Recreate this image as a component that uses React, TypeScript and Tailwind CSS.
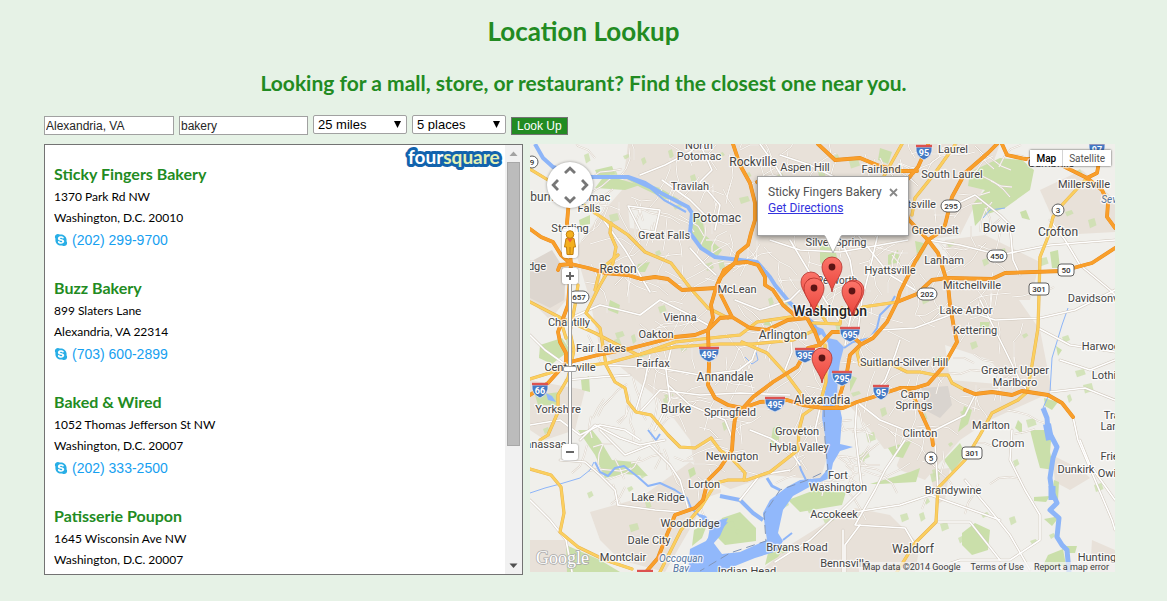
import React from "react";
import { FaSkype } from "react-icons/fa";

const places = [
  { name: "Sticky Fingers Bakery", street: "1370 Park Rd NW", city: "Washington, D.C. 20010", phone: "(202) 299-9700" },
  { name: "Buzz Bakery", street: "899 Slaters Lane", city: "Alexandria, VA 22314", phone: "(703) 600-2899" },
  { name: "Baked & Wired", street: "1052 Thomas Jefferson St NW", city: "Washington, D.C. 20007", phone: "(202) 333-2500" },
  { name: "Patisserie Poupon", street: "1645 Wisconsin Ave NW", city: "Washington, D.C. 20007", phone: "" },
];

const urban = [
  "M628 144L745 144L1000 144L985 185L960 235L925 240L950 262L1005 280L1040 330L1052 392L990 420L960 440L925 480L900 470L870 430L845 400L820 480L770 475L700 500L690 440L660 400L600 350L590 300L575 250L600 215L622 190Z",
  "M530 260L560 262L566 300L550 320L530 300Z",
  "M530 540L566 540L568 572L530 572Z",
  "M590 512L640 498L690 462L712 478L695 520L665 572L620 560L600 540Z",
  "M945 240L985 235L1040 262L1030 300L980 300L950 270Z",
  "M1052 455L1082 470L1090 478L1070 490L1055 482Z",
  "M855 508L890 515L920 545L915 572L760 572L790 545L830 520Z",
  "M530 380L585 390L575 430L545 440L530 430Z",
  "M1040 190L1082 170L1115 200L1115 232L1060 235Z",
  "M930 470L950 468L945 500L936 505Z",
  "M1092 540L1115 550L1115 572L1090 572Z",
];

const bare = [
  "M628 206L660 210L655 232L630 228Z", "M540 146L626 144L624 172L590 174L556 165Z",
  "M590 385L625 392L635 418L605 434L580 425Z", "M945 345L990 360L1010 385L950 380Z",
  "M720 500L760 512L762 535L735 528Z", "M880 450L905 445L890 482L872 478Z",
  "M720 484L752 500L745 505L722 498Z",
];

const parks = [
  "M970 172L1000 158L1022 160L1034 170L1030 190L1005 208L985 215L975 226L972 205L985 190L968 186Z",
  "M788 500L815 490L846 492L842 505L800 512Z",
  "M722 518L740 512L756 528L756 541L725 545L715 535Z",
  "M694 530L708 522L702 538L692 546Z",
  "M1030 430L1052 430L1050 452L1054 470L1040 468L1035 450Z",
  "M962 533L975 523L990 530L988 550L972 555L962 545Z",
  "M1044 519L1060 516L1052 526Z", "M1034 497L1050 496L1046 502L1034 501Z",
  "M1054 480L1059 482L1058 500L1052 494Z",
  "M692 214L702 216L705 235L722 250L716 258L702 248L692 234Z",
  "M625 178L660 188L680 200L665 199L640 187Z", "M595 170L612 166L615 174L598 177Z",
  "M579 220L590 215L590 224L580 226Z", "M605 175L595 188L625 190L640 185Z",
  "M578 430L592 430L600 440L612 460L635 462L648 476L625 474L605 478L595 455Z",
  "M566 545L600 560L620 572L567 572Z", "M540 345L562 338L570 350L552 364L539 358Z",
  "M581 380L589 376L590 392L582 390Z", "M535 395L560 392L556 405L538 405Z",
  "M820 246L834 244L838 262L828 272L820 262Z", "M915 241L928 244L918 262Z",
  "M688 470L694 467L696 474L690 478Z", "M1044 398L1058 402L1052 410L1045 406Z",
  "M768 553L786 546L778 557L765 565Z", "M1048 555L1063 549L1066 565L1040 572Z",
  "M944 460L960 443L966 455L952 472Z", "M888 448L912 440L903 458L893 456Z",
  "M870 484L910 472L920 468L916 482L880 484Z", "M964 406L972 410L968 424L958 432Z",
  "M1020 212L1026 210L1030 220L1022 218Z", "M1050 252L1058 250L1060 268L1052 268Z",
  "M773 428L780 425L778 450L770 446Z", "M1015 428L1018 420L1022 424L1022 434Z",
  "M638 264L650 262L645 272L635 272Z", "M610 300L620 305L618 314L608 310Z",
  "M880 148L892 152L888 164L878 160Z", "M772 215L790 210L800 225L784 228Z",
  "M765 320L772 318L772 326L764 325Z", "M850 375L857 378L850 392Z",
  "M980 322L990 322L988 330L980 328Z", "M1056 346L1062 350L1058 356Z",
  "M888 255L898 250L900 262L888 265Z", "M1063 546L1077 546L1075 553L1066 553Z",
];

const water = [
  "M815 326L823 329L828 338L837 340L844 347L840 362L838 376L837 395L842 418L840 444L853 447L840 451L833 463L830 478L813 485L793 496L783 510L778 533L783 541L777 551L755 558L735 566L718 572L688 572L690 549L706 541L712 532L709 522L718 524L728 522L718 534L713 542L722 554L740 552L767 540L763 513L770 500L787 487L800 480L820 478L827 470L825 435L822 418L823 402L827 382L830 362L828 343Z",
  "M700 514L706 516L710 522L704 526Z",
  "M728 518L720 536L713 544L722 556L700 556L708 538L711 522Z",
  "M546 393L552 396L556 402L548 400Z",
];

const rivers: [string, number][] = [
  ["M535 144L543 158L553 167L568 172L591 177L628 177L645 183L661 193L688 207L692 213L690 233L701 248L715 257L740 260L757 262L770 277L775 285L790 303L803 315L812 322L820 335", 4],
  ["M628 178L650 188L664 200L686 212", 2],
  ["M844 348L853 342L870 338L877 328L880 315L890 305L895 296", 2],
  ["M1043 408L1047 418L1048 430L1057 447L1053 458L1050 478L1052 492L1057 503L1050 510L1059 518L1057 537L1062 545L1067 550L1069 572", 5],
  ["M1047 424L1050 440", 8], ["M1052 486L1052 500", 7],
  ["M595 462L600 472L608 476L615 468L624 466L638 477L648 486L660 483L675 490L687 498L691 508L701 517", 2],
  ["M530 493L545 488L560 484L580 478L590 470L594 462", 1],
  ["M1068 308L1062 325L1052 358L1050 392L1043 408", 1],
  ["M720 496L740 500L753 513L763 520", 4],
  ["M798 460L801 470L806 480", 2],
  ["M648 430L656 440L660 434", 2],
  ["M767 478L772 486L780 490", 3],
  ["M1005 208L990 210L983 218", 1],
  ["M745 357L752 364L758 360L756 352", 1],
  ["M783 540L792 533", 2],
];

const freeways = [
  "M530 229L541 237L553 242L561 255L571 264L588 268L605 273L628 275L641 279L655 277L668 279L678 287L682 290L716 288",
  "M733 144L740 165L750 183L755 203L755 220L751 233L748 245L738 253L735 263L720 278L716 288L711 305L713 318L708 330L709 365L708 385L715 398L728 405L743 408L760 402L787 400L803 405L823 408L843 408L857 402L870 398L900 388L915 388L928 384L942 368L948 358L957 342L954 328L950 305L948 285L938 253L928 240L908 219",
  "M735 263L747 262L758 265L765 277L765 285L773 290L783 305L798 318L807 318L815 332L820 345",
  "M716 288L724 270L735 263",
  "M757 182L775 195L800 210L830 214L870 206L908 219",
  "M902 388L912 393L922 415L928 428L932 437L933 445",
  "M928 240L915 262L900 292L897 302L887 322L873 338L860 345L850 355L847 372L840 395L836 408",
  "M897 302L917 294L932 280L948 278L992 279L1005 273L1062 271L1092 263L1115 248",
  "M928 240L940 232L945 225L952 197L965 173L988 153L997 144",
  "M1002 144L1007 155L1025 159L1050 159L1067 168L1087 178L1097 173L1100 157L1098 148",
  "M1087 178L1102 190L1108 203L1107 217L1115 228",
  "M818 144L835 160L860 158L877 165L900 171L917 171",
  "M928 145L918 167L907 180L903 192L908 219",
  "M530 395L548 383L566 363L598 355L628 349L675 337L695 335L708 330L720 318L732 317L750 328L767 330L788 320L807 318",
  "M720 293L732 317", "M571 264L560 265L558 270",
  "M569 200L567 223L571 264L568 305L558 332L560 342L566 353L566 363",
  "M743 408L753 397L773 382L797 367L808 348L820 345L832 332L847 332L860 343",
  "M743 408L735 418L733 435L732 450L720 468L708 480L703 500L695 508L675 515L666 537L658 558L646 572",
  "M965 390L975 394L992 392L1012 395L1022 391L1048 395L1062 403L1073 417",
];

const highways = [
  "M530 169L548 180L595 213L628 235L645 252L671 263L691 289L708 308L728 318",
  "M611 223L610 233L616 247L613 263L600 285L586 313L600 328L606 365L615 382L625 388L628 402L636 412L651 415L668 435L680 447L695 448L711 438L720 450L733 460L745 473L744 480",
  "M530 302L561 318L595 333L618 345L638 355", "M530 379L566 368L608 363L641 354L675 342L720 337L740 335L757 322L790 317L807 318",
  "M641 354L675 347L720 344L753 344L793 340L815 330", "M742 342L767 353L787 375L807 402",
  "M578 285L575 305L570 332L574 350L568 378L558 395L558 412L548 435L540 440",
  "M825 345L826 382L820 403L803 415L799 430L798 450L770 472L747 480L728 480L716 483L701 507L681 530L660 572",
  "M530 469L551 475L561 487L564 513L560 532L578 547L605 560L632 569",
  "M853 315L863 307L897 302", "M860 345L857 352L860 365L893 365L907 372L920 372L935 375L948 375L952 383L965 390",
  "M1087 178L1062 205L1053 217L1048 237L1040 257L1039 295L1038 328L1032 365L1027 392L1018 400L992 413L980 435L965 460L938 488L936 522L915 543L897 572",
  "M813 323L840 324L842 308", "M955 145L935 173L915 198L912 215", "M902 144L893 160L883 178",
  "M595 290L600 270L618 255", "M560 318L566 338", "M812 290L816 305L826 322",
];

const whiteRoads = [
  "M700 144L712 170L700 182L720 205L715 230", "M640 175L665 165L690 152L700 144", "M662 180L690 200L705 215L720 222",
  "M628 206L660 210L655 232L640 230L628 206", "M690 248L705 265L716 275", "M600 215L625 250L640 275L650 292",
  "M566 320L600 305L640 315L660 300L690 315L708 325", "M530 335L545 350L566 365", "M650 355L645 380L636 410",
  "M606 365L660 368L700 375L740 370", "M668 385L690 405L725 420L733 440", "M640 412L660 390L700 395L740 393L790 395",
  "M566 380L600 377L630 375", "M672 345L666 370L670 400L655 430", "M530 425L560 420L580 435L600 425L625 430L640 440",
  "M665 440L640 445L620 438L595 425L580 440", "M600 430L625 455L650 445L670 465L680 480L688 508",
  "M560 460L585 462L600 475L615 490L618 505", "M618 505L655 510L680 512", "M530 500L550 520L566 540L572 572",
  "M750 430L770 438L790 450L800 465", "M760 144L775 165L790 190L800 210", "M780 155L810 165L840 180L870 178L900 185",
  "M790 240L808 270L825 300L840 322", "M836 230L850 260L855 290L850 320L845 345", "M770 240L800 250L840 252L880 245L908 240",
  "M735 300L760 310L790 300L800 290", "M850 225L870 250L890 275L915 290", "M880 225L872 260L862 300L858 330",
  "M948 208L975 195L1000 215L1010 225L1013 260L1020 275", "M928 240L960 245L1000 255L1050 245L1115 240",
  "M1050 220L1065 240L1080 265L1110 290L1115 295", "M950 305L995 320L1040 318L1075 310L1115 290",
  "M950 315L915 328L880 330L860 345", "M980 300L990 320L1005 350L1022 385L1030 392", "M857 402L880 420L905 430L935 430L965 415L975 395",
  "M857 402L855 430L862 490L842 510L810 540L775 562", "M905 440L885 470L875 490L855 525L905 528L915 545", "M855 512L900 505L930 495L1000 520",
  "M935 445L938 490", "M938 522L970 522L1000 560", "M965 480L990 510L1010 535L1030 570", "M1012 430L1010 460L1025 490L1040 515L1040 540L1010 560L960 560L930 570",
  "M1073 417L1078 440L1095 480L1112 520L1115 530", "M1050 392L1085 388L1115 400", "M1060 360L1090 370L1115 360", "M1115 500L1090 465L1080 440",
  "M820 408L815 430L818 450", "M740 500L760 475L790 470", "M843 530L843 572", "M860 525L845 545L845 572",
  "M728 378L752 360L760 338", "M783 375L792 352L790 330", "M870 398L885 380L895 355L900 340", "M1038 328L1070 345L1115 352",
];

// Local streets: short bent segments spread with a small linear generator.
const localStreets = (() => {
  let seed = 41;
  const next = () => (seed = (seed * 16807) % 2147483647) / 2147483647;
  const lines: string[] = [];
  for (let i = 0; i < 330; i++) {
    let x = 585 + next() * 430;
    let y = 146 + next() * 345;
    let angle = next() * 6.28;
    let d = `M${x.toFixed(0)} ${y.toFixed(0)}`;
    const steps = 2 + Math.floor(next() * 3);
    for (let s = 0; s < steps; s++) {
      angle += (next() - 0.5) * 1.1;
      x += Math.cos(angle) * 11;
      y += Math.sin(angle) * 11;
      d += `L${x.toFixed(0)} ${y.toFixed(0)}`;
    }
    lines.push(d);
  }
  return lines;
})();

const greenSpots = (() => {
  let seed = 977;
  const next = () => (seed = (seed * 16807) % 2147483647) / 2147483647;
  return Array.from({ length: 90 }, () => {
    const x = Math.round(535 + next() * 560);
    const y = Math.round(150 + next() * 400);
    const w = 3 + next() * 6;
    const h = 2 + next() * 6;
    return `M${x} ${y}l${w.toFixed(1)} -2l2 ${h.toFixed(1)}l-${w.toFixed(1)} 3Z`;
  });
})();

// [text, centre x, baseline y, size]
const labels: [string, number, number, number][] = [
  ["North", 699, 149, 11], ["Potomac", 699, 160, 11], ["Rockville", 753, 166, 12], ["Aspen Hill", 805, 171, 11],
  ["Fairland", 881, 173, 11], ["Laurel", 953, 153, 11], ["South Laurel", 952, 178, 11], ["Travilah", 690, 190, 11],
  ["Potomac", 717, 222, 12], ["Ashburn", 532, 201, 12], ["Potomac", 588, 201, 11], ["Falls", 589, 212, 11],
  ["Sterling", 570, 232, 11], ["Great Falls", 664, 239, 11], ["Reston", 618, 273, 12], ["dge", 537, 270, 11],
  ["McLean", 737, 293, 11], ["Silver Spring", 836, 246, 11], ["Hyattsville", 890, 274, 11], ["Petworth", 837, 284, 10],
  ["Beltsville", 914, 208, 11], ["Greenbelt", 935, 234, 11], ["Bowie", 999, 232, 12], ["Crofton", 1058, 236, 12],
  ["Gambrills", 1051, 167, 11], ["Millersville", 1084, 188, 11], ["Lanham", 944, 264, 11], ["Mitchellville", 972, 289, 11],
  ["Lake Arbor", 966, 314, 11], ["Kettering", 975, 334, 11], ["Davidsonville", 1100, 302, 11], ["Harwood", 1104, 350, 11],
  ["Lothian", 1110, 379, 11], ["Vienna", 680, 321, 11], ["Chantilly", 569, 326, 11], ["Oakton", 656, 338, 11],
  ["Fair Lakes", 601, 352, 11], ["Fairfax", 653, 367, 11], ["Centreville", 570, 371, 11], ["Annandale", 725, 381, 12],
  ["Yorkshire", 558, 413, 11], ["Burke", 676, 413, 12], ["Springfield", 730, 416, 11], ["Arlington", 783, 339, 12],
  ["Alexandria", 822, 404, 12], ["Suitland-Silver Hill", 904, 366, 11], ["Greater Upper", 1015, 374, 11], ["Marlboro", 1015, 386, 11],
  ["Camp", 915, 398, 11], ["Springs", 914, 409, 11], ["Clinton", 920, 437, 11], ["Marlton", 991, 429, 11],
  ["Croom", 1008, 447, 11], ["Groveton", 797, 435, 11], ["Hybla Valley", 799, 451, 11], ["Newington", 732, 460, 11],
  ["Lorton", 704, 488, 11], ["Lake Ridge", 658, 501, 11], ["Woodbridge", 690, 527, 11], ["Dale City", 649, 544, 11],
  ["Montclair", 623, 561, 11], ["Manassas", 541, 448, 11], ["Fort", 838, 479, 11], ["Washington", 838, 491, 11],
  ["Accokeek", 834, 518, 11], ["Bryans Road", 797, 551, 11], ["Bennsville", 845, 567, 11], ["Indian Head", 747, 575, 11],
  ["Waldorf", 913, 553, 12], ["Brandywine", 953, 494, 11], ["Dunkirk", 1076, 473, 11], ["Huntingtown", 1109, 561, 11],
  ["Friendship", 1126, 460, 11], ["Owings", 1116, 477, 11], ["Tracys", 1120, 419, 11], ["Landing", 1120, 430, 11],
];

const interstates: [string, number, number][] = [
  ["95", 924, 152], ["97", 1097, 149], ["495", 709, 354], ["66", 540, 390], ["695", 850, 334],
  ["395", 805, 355], ["295", 842, 378], ["95", 881, 392], ["495", 775, 404], ["95", 645, 577],
];
const routes: [string, number, number][] = [
  ["9", 532, 162], ["657", 579, 297], ["295", 951, 206], ["3", 1058, 210], ["450", 997, 256],
  ["50", 1066, 270], ["301", 1039, 289], ["202", 927, 294], ["301", 972, 453], ["5", 931, 458],
];
const pins: [number, number][] = [[811, 307], [854, 315], [814, 313], [852, 316], [832, 292], [822, 383]];

function Pin({ x, y }: { x: number; y: number }) {
  return (
    <g transform={`translate(${x} ${y})`}>
      <path d="M0 0C-1 -9 -10 -16 -10 -25A10 10 0 0 1 10 -25C10 -16 1 -9 0 0Z" fill="url(#pin)" stroke="#b5312b" strokeWidth="0.8" />
      <circle cx="0" cy="-25" r="3.4" fill="#5c1414" />
    </g>
  );
}

function MapCanvas() {
  return (
    <svg viewBox="530 144 585 428" preserveAspectRatio="xMidYMid slice" className="block h-full w-full" role="img" aria-label="Map">
      <defs>
        <linearGradient id="pin" x1="0" y1="0" x2="0" y2="1">
          <stop offset="0" stopColor="#fb7469" />
          <stop offset="1" stopColor="#ea453c" />
        </linearGradient>
      </defs>
      <rect x="530" y="144" width="585" height="428" fill="#f0efeb" />
      <g fill="#e8e1d9">{urban.map((d) => <path key={d} d={d} />)}</g>
      <g fill="#f0efeb">{bare.map((d) => <path key={d} d={d} />)}</g>
      <path d="M922 388L948 386L952 405L940 418L925 410Z" fill="#d9d4cf" />
      <path d="M530 262L552 250L566 272L564 300L550 308L530 298Z" fill="#ddd6cf" />
      <g fill="#cadfaa">
        {parks.map((d) => <path key={d} d={d} />)}
        {greenSpots.map((d) => <path key={d} d={d} opacity="0.75" />)}
      </g>
      <g fill="none" stroke="#d9d0c6" strokeWidth="1.8">{localStreets.map((d, i) => <path key={i} d={d} />)}</g>
      <g fill="none" stroke="#faf8f5" strokeWidth="1">{localStreets.map((d, i) => <path key={i} d={d} />)}</g>
      <g fill="#91b8fb">{water.map((d) => <path key={d} d={d} />)}</g>
      <g fill="none" stroke="#8db5f8" strokeLinejoin="round">{rivers.map(([d, w]) => <path key={d} d={d} strokeWidth={w} />)}</g>
      <path d="M824 408L825 440L828 470L805 481L780 490L764 514L766 541L730 553L700 571" fill="none" stroke="#8296b8" strokeWidth="1" strokeDasharray="9 5" />
      <g fill="none" strokeLinejoin="round" strokeLinecap="round">
        <g stroke="#cfc6bb" strokeWidth="2.6">{whiteRoads.map((d) => <path key={d} d={d} />)}</g>
        <g stroke="#ffffff" strokeWidth="1.6">{whiteRoads.map((d) => <path key={d} d={d} />)}</g>
        <g stroke="#e6b24c" strokeWidth="3.2">{highways.map((d) => <path key={d} d={d} />)}</g>
        <g stroke="#fbcf5f" strokeWidth="2.4">{highways.map((d) => <path key={d} d={d} />)}</g>
        <g stroke="#e78a1b" strokeWidth="3.8">{freeways.map((d) => <path key={d} d={d} />)}</g>
        <g stroke="#f99f2b" strokeWidth="3">{freeways.map((d) => <path key={d} d={d} />)}</g>
      </g>
      {interstates.map(([n, x, y], i) => {
        const w = n.length > 2 ? 10 : 8;
        return (
          <g key={i}>
            <path d={`M${x - w} ${y - 5}h${w * 2}q1 9 -${w} 13q-${w + 1} -4 -${w} -13Z`} fill="#4479c4" stroke="#e9eef6" strokeWidth="0.8" />
            <path d={`M${x - w} ${y - 6}h${w * 2}`} stroke="#dc5250" strokeWidth="2.4" />
            <text x={x} y={y + 4} textAnchor="middle" fontSize="9" fontWeight="700" fill="#ffffff">{n}</text>
          </g>
        );
      })}
      {routes.map(([n, x, y], i) => (
        <g key={i}>
          <rect x={x - 4 - n.length * 2} y={y - 6} width={8 + n.length * 4} height="12" rx={n === "301" || n === "50" ? 3 : 6} fill="#ffffff" stroke="#5f5f5f" strokeWidth="1" />
          <text x={x} y={y + 3} textAnchor="middle" fontSize="8" fontWeight="500" fill="#333333">{n}</text>
        </g>
      ))}
      <g fill="#444444" stroke="#ffffff" strokeOpacity="0.75" strokeWidth="2.5" paintOrder="stroke" strokeLinejoin="round" textAnchor="middle">
        {labels.map(([t, x, y, s], i) => <text key={i} x={x} y={y} fontSize={s}>{t}</text>)}
        <text x="830" y="316" fontSize="14" fontWeight="500" fill="#222222">Washington</text>
        <g fontSize="10" fontStyle="italic" fill="#52749f">
          <text x="681" y="562">Occoquan</text>
          <text x="681" y="572">Bay</text>
          <text x="1116" y="203">Severn</text>
        </g>
      </g>
      {pins.map(([x, y], i) => <Pin key={i} x={x} y={y} />)}
      <text x="536" y="564" fontSize="18" fontFamily="Liberation Serif, serif" fill="#ffffff" stroke="#aaaaaa" strokeWidth="1.5" paintOrder="stroke">Google</text>
    </svg>
  );
}

function PanButton({ label, rotate, place }: { label: string; rotate: number; place: string }) {
  return (
    <button type="button" aria-label={label} className={`flex items-center justify-center ${place}`}>
      <svg width="12" height="8" viewBox="0 0 12 8" className="shrink-0" style={{ transform: `rotate(${rotate}deg)` }}>
        <path d="M1 7L6 2.200L11 7" fill="none" stroke="#777777" strokeWidth="2.8" />
      </svg>
    </button>
  );
}

function MapPanel() {
  return (
    <section aria-label="Results map" className="relative h-[428px] min-w-0 overflow-hidden font-[Roboto,sans-serif]">
      <MapCanvas />

      <div className="absolute top-[18px] left-[17px] grid size-[46px] grid-cols-3 grid-rows-3 rounded-full bg-white shadow-[0_0_3px_rgba(0,0,0,0.4)]">
        <PanButton label="Pan up" rotate={0} place="col-start-2 row-start-1" />
        <PanButton label="Pan left" rotate={-90} place="col-start-1 row-start-2" />
        <PanButton label="Pan right" rotate={90} place="col-start-3 row-start-2" />
        <PanButton label="Pan down" rotate={180} place="col-start-2 row-start-3" />
      </div>

      <div className="absolute top-[83px] left-8 flex w-4 flex-col items-center">
        <button type="button" aria-label="Street View" className="flex h-[31px] w-4 items-center justify-center rounded-sm bg-white/90 shadow-[0_0_2px_rgba(0,0,0,0.5)]">
          <svg width="14" height="28" viewBox="0 0 14 28">
            <path d="M3 9.5Q7 8 11 9.5L12.5 18H10.5L10 25.500H4L3.500 18H1.500Z" fill="#f4b01e" stroke="#c07f10" strokeWidth="1" />
            <path d="M4 9.500L7 13.500L10 9.500Z" fill="#f0603a" />
            <path d="M7 18V25" stroke="#c07f10" strokeWidth="1" />
            <circle cx="7" cy="5.500" r="3.800" fill="#f4b01e" stroke="#c07f10" strokeWidth="1" />
          </svg>
        </button>
        <button type="button" aria-label="Zoom in" className="relative mt-2.5 flex size-4 shrink-0 items-center justify-center rounded-xs bg-white shadow-[0_0_2px_rgba(0,0,0,0.5)]">
          <svg width="8" height="8" viewBox="0 0 8 8"><path d="M4 0V8M0 4H8" stroke="#666666" strokeWidth="2" /></svg>
        </button>
        <div className="relative h-[160px] w-1 border-x border-neutral-400 bg-white">
          <input
            type="range"
            aria-label="Zoom level"
            min="0"
            max="100"
            defaultValue="47"
            className="absolute inset-y-0 -left-1.5 h-full w-3.5 appearance-none bg-transparent [direction:rtl] [writing-mode:vertical-lr] [&::-webkit-slider-thumb]:h-[6px] [&::-webkit-slider-thumb]:w-[14px] [&::-webkit-slider-thumb]:appearance-none [&::-webkit-slider-thumb]:rounded-xs [&::-webkit-slider-thumb]:border [&::-webkit-slider-thumb]:border-neutral-400 [&::-webkit-slider-thumb]:bg-white"
          />
        </div>
        <button type="button" aria-label="Zoom out" className="flex size-4 shrink-0 items-center justify-center rounded-xs bg-white shadow-[0_0_2px_rgba(0,0,0,0.5)]">
          <svg width="8" height="8" viewBox="0 0 8 8"><path d="M0 4H8" stroke="#666666" strokeWidth="2" /></svg>
        </button>
      </div>

      <div className="absolute top-1.5 right-1 flex h-4 items-stretch bg-white text-[10px] shadow-[0_0_2px_rgba(0,0,0,0.7)]">
        <button type="button" className="border-r border-neutral-300 px-1.5 font-medium text-black">Map</button>
        <button type="button" className="px-1.5 text-neutral-600">Satellite</button>
      </div>

      <div className="absolute top-8 left-[227px] h-[60px] w-[152px] border border-neutral-400 bg-white px-2.5 pt-[7px] text-[12px] leading-4 text-neutral-600 shadow-[0_2px_5px_rgba(0,0,0,0.4)]">
        <div className="flex items-center justify-between">
          <span className="whitespace-nowrap">Sticky Fingers Bakery</span>
          <button type="button" aria-label="Close">
            <svg width="9" height="9" viewBox="0 0 9 9"><path d="M1 1L8 8M8 1L1 8" stroke="#888888" strokeWidth="1.8" /></svg>
          </button>
        </div>
        <a href="#directions" className="text-[#3333dd] underline">Get Directions</a>
        <svg className="absolute top-[57px] left-[66px]" width="18" height="20" viewBox="0 0 18 20">
          <path d="M0 0L9 19L18 0Z" fill="#ffffff" />
          <path d="M1 2L9 19L17 2" fill="none" stroke="#a3a3a3" strokeWidth="0.8" />
        </svg>
      </div>

      <footer className="absolute right-0 bottom-0 flex h-2.5 items-center gap-2.5 bg-[#f5f5f5]/70 pr-1.5 pl-1 text-[9px] leading-none text-neutral-700">
        <span>Map data ©2014 Google</span>
        <a href="#terms">Terms of Use</a>
        <a href="#report">Report a map error</a>
      </footer>
    </section>
  );
}

function ResultsPanel() {
  return (
    <section aria-label="Places" className="relative flex h-[431px] min-w-0 border border-neutral-500 bg-white">
      <ul className="min-w-0 flex-1 space-y-6 overflow-hidden pt-[17px] pl-[9px]">
        {places.map((p) => (
          <li key={p.name}>
            <h3 className="text-[16px] leading-6 font-bold text-[#228b22]">{p.name}</h3>
            <p className="text-[12px] leading-[21px] text-black">{p.street}</p>
            <p className="text-[12px] leading-[21px] text-black">{p.city}</p>
            {p.phone && (
              <a href={`tel:${p.phone}`} className="flex h-6 items-center gap-1 font-['Liberation_Sans',sans-serif] text-[14px] text-[#16a0f0]">
                <FaSkype className="size-[14px] text-[#28aee6]" aria-hidden="true" />
                {p.phone}
              </a>
            )}
          </li>
        ))}
      </ul>
      <svg className="absolute top-0 right-[18px]" width="102" height="28" viewBox="0 0 102 28" role="img" aria-label="foursquare">
        <g fontFamily="Lato, sans-serif" fontSize="19" fontWeight="700" strokeLinejoin="round">
          <text x="6" y="19" stroke="#1263ad" strokeWidth="6" fill="#1263ad">foursquare</text>
          <text x="6" y="19" fill="#ffffff">four<tspan fill="#e4f0b4">square</tspan></text>
        </g>
      </svg>
      <div aria-hidden="true" className="flex w-[17px] flex-col items-center bg-[#f1f1f1]">
        <svg width="17" height="17" viewBox="0 0 17 17"><path d="M4.500 11L8.500 6.500L12.500 11Z" fill="#a3a3a3" /></svg>
        <div className="w-full flex-1 px-0.5"><div className="h-[72%] border border-[#a8a8a8] bg-[#bcbcbc]" /></div>
        <svg width="17" height="17" viewBox="0 0 17 17"><path d="M4.500 6.500L8.500 11L12.500 6.500Z" fill="#505050" /></svg>
      </div>
    </section>
  );
}

function Choice({ label, value }: { label: string; value: string }) {
  return (
    <div className="relative">
      <select aria-label={label} defaultValue={value} className="block h-[19px] w-[94px] appearance-none rounded-xs border border-neutral-400 bg-white pl-1 text-[13px] leading-none text-black">
        <option value={value}>{value}</option>
      </select>
      <svg className="pointer-events-none absolute top-1.5 right-1.5" width="7" height="7" viewBox="0 0 7 7"><path d="M0 0H7L3.500 7Z" fill="#000000" /></svg>
    </div>
  );
}

export default function App() {
  return (
    <main className="min-h-screen bg-[#e6f2e6] pt-[11px] font-[Lato,sans-serif]">
      <h1 className="text-center text-[26px] leading-10 font-bold text-[#228b22]">Location Lookup</h1>
      <h2 className="mt-4 text-center text-[21px] leading-8 font-bold text-[#228b22]">
        Looking for a mall, store, or restaurant? Find the closest one near you.
      </h2>
      <div className="pt-4 pr-[52px] pb-6 pl-11">
        <form className="flex items-start gap-[5px] font-['Liberation_Sans',sans-serif]" onSubmit={(e) => e.preventDefault()}>
          <input aria-label="Location" defaultValue="Alexandria, VA" className="mt-px h-[19px] w-[130px] border border-neutral-400 bg-white px-px text-[12px] text-neutral-800" />
          <input aria-label="Search for" defaultValue="bakery" className="mt-px h-[19px] w-[129px] border border-neutral-400 bg-white px-px text-[12px] text-neutral-800" />
          <Choice label="Distance" value="25 miles" />
          <Choice label="Results" value="5 places" />
          <button type="submit" className="mt-0.5 h-[18px] border border-neutral-500 bg-[#228b22] px-[5px] text-[12px] leading-none text-white">Look Up</button>
        </form>
        <div className="mt-[9px] grid grid-cols-[479fr_585fr] items-start gap-[7px]">
          <ResultsPanel />
          <MapPanel />
        </div>
      </div>
    </main>
  );
}
